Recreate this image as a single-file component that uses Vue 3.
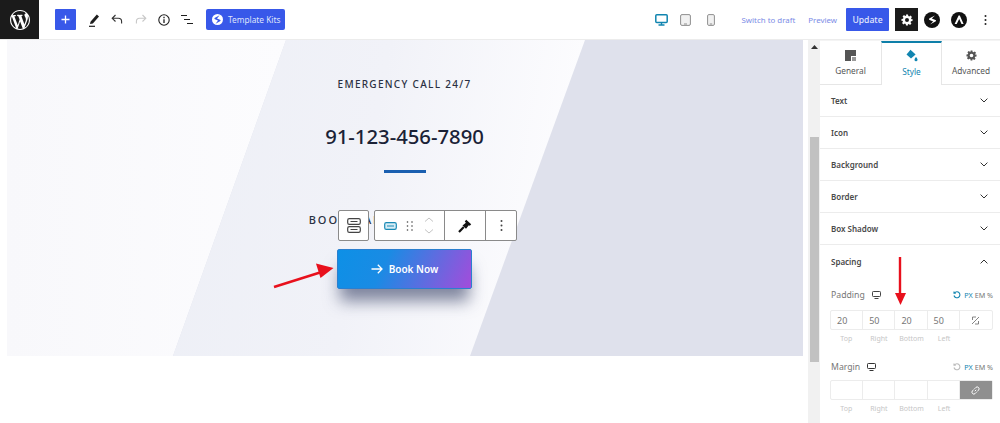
<script setup>
const wp = "M20 10c0-5.51-4.49-10-10-10C4.48 0 0 4.49 0 10c0 5.52 4.48 10 10 10 5.51 0 10-4.48 10-10zM7.78 15.37L4.37 6.22c.55-.02 1.17-.08 1.17-.08.5-.06.44-1.13-.06-1.11 0 0-1.45.11-2.37.11-.18 0-.37 0-.58-.01C4.12 2.69 6.87 1.11 10 1.11c2.33 0 4.45.87 6.05 2.34-.68-.11-1.65.39-1.65 1.58 0 .74.45 1.36.9 2.1.35.61.55 1.36.55 2.46 0 1.49-1.4 5-1.4 5l-3.03-8.37c.54-.02.82-.17.82-.17.5-.05.44-1.25-.06-1.22 0 0-1.44.12-2.38.12-.87 0-2.33-.12-2.33-.12-.5-.03-.56 1.2-.06 1.22l.92.08 1.26 3.41zM17.41 10c.24-.64.74-1.87.43-4.25.7 1.29 1.05 2.71 1.05 4.25 0 3.29-1.73 6.24-4.4 7.78.97-2.59 1.94-5.2 2.92-7.78zM6.1 18.09C3.12 16.65 1.11 13.53 1.11 10c0-1.3.23-2.48.72-3.59C3.25 10.3 4.67 14.2 6.1 18.09zm4.03-6.63l2.58 6.98c-.86.29-1.76.45-2.71.45-.79 0-1.57-.11-2.29-.33.81-2.38 1.62-4.74 2.42-7.1z"
const gear = "M10 1h4l.6 3.1 1.9.8 2.6-1.8 2.8 2.8-1.8 2.6.8 1.9L23 10v4l-3.1.6-.8 1.9 1.8 2.6-2.8 2.8-2.6-1.8-1.9.8L14 23h-4l-.6-3.1-1.9-.8-2.6 1.8-2.8-2.8 1.8-2.6-.8-1.9L1 14v-4l3.1-.6.8-1.9L3.1 4.9l2.8-2.8 2.6 1.8 1.9-.8zM12 8a4 4 0 1 0 0 8 4 4 0 0 0 0-8z"
const rows = ['Text', 'Icon', 'Background', 'Border', 'Box Shadow']
const sides = ['Top', 'Right', 'Bottom', 'Left']
const padding = ['20', '50', '20', '50']
</script>

<template>
  <div class="app">
    <header class="top">
      <div class="logo"><svg width="20" height="20" viewBox="0 0 20 20"><path :d="wp" fill="#fff" fill-rule="evenodd"/></svg></div>
      <div class="tools">
        <button class="plus"><svg width="11" height="11" viewBox="0 0 11 11"><path d="M5.5 1.5v8M1.5 5.5h8" stroke="#fff" stroke-width="1.3"/></svg></button>
        <svg class="pencil" width="12" height="14" viewBox="0 0 12 14"><path d="M2.5 8.8 8.800 1.600l2.200 1.900-6.100 7-2.900.6z" fill="#1e1e1e"/><path d="M1 13.300h6" stroke="#1e1e1e" stroke-width="1.2"/></svg>
        <svg class="undo" width="12" height="11" viewBox="0 0 12 11"><path d="M4.5 1 1.200 4.300 4.500 7.500M1.400 4.300h6c2 0 3.200 1.200 3.200 3.100v2.200" fill="none" stroke="#333" stroke-width="1.1"/></svg>
        <svg class="redo" width="12" height="11" viewBox="0 0 12 11"><path d="M7.500 1l3.300 3.300L7.500 7.500M10.600 4.300h-6c-2 0-3.200 1.200-3.200 3.100v2.200" fill="none" stroke="#c8c8c8" stroke-width="1.1"/></svg>
        <svg class="info" width="12" height="12" viewBox="0 0 12 12"><circle cx="6" cy="6" r="5.200" fill="none" stroke="#1e1e1e" stroke-width="1.1"/><path d="M6 5.200v3.800M6 2.800v1.500" stroke="#1e1e1e" stroke-width="1.3"/></svg>
        <svg class="list" width="12" height="11" viewBox="0 0 12 11"><path d="M0 1.500h6M3 5.500h6M6 9.500h6" stroke="#1e1e1e" stroke-width="1.1"/></svg>
        <button class="kits"><span class="s-dot"><svg width="7" height="9" viewBox="0 0 7 9"><path d="M5.600.3 1 2.800c-.8.400-.7 1.100 0 1.500l3 1.300L1.600 8.700 6 6.200c.8-.4.700-1.100 0-1.500L3 3.400z" fill="#3858e9"/></svg></span>Template Kits</button>
      </div>
      <div class="actions">
        <svg width="13" height="12" viewBox="0 0 13 12"><rect x=".8" y=".8" width="11.400" height="7.600" rx="1" fill="none" stroke="#1185b0" stroke-width="1.5"/><path d="M6.500 8.500v2M3.500 11h6" stroke="#1185b0" stroke-width="1.4"/></svg>
        <svg class="tablet" width="11" height="12" viewBox="0 0 11 12"><rect x=".6" y=".6" width="9.800" height="10.800" rx="1.400" fill="#f1f1f1" stroke="#8f8f8f" stroke-width="1"/><path d="M4 10h3" stroke="#8f8f8f"/></svg>
        <svg class="mobile" width="8" height="12" viewBox="0 0 8 12"><rect x=".6" y=".6" width="6.800" height="10.800" rx="1.300" fill="#f1f1f1" stroke="#8f8f8f" stroke-width="1"/><path d="M2.800 10h2.400" stroke="#8f8f8f"/></svg>
        <a class="link draft">Switch to draft</a>
        <a class="link preview">Preview</a>
        <button class="update">Update</button>
        <span class="gear"><svg width="12" height="12" viewBox="0 0 24 24"><path fill="#fff" fill-rule="evenodd" :d="gear"/></svg></span>
        <span class="round first"><svg width="16" height="16" viewBox="0 0 16 16"><circle cx="8" cy="8" r="8" fill="#111"/><path d="M11 3.600 5.600 6.300c-.9.500-.8 1.300 0 1.700l3.600 1.400-3.200 3 5.400-2.800c.9-.5.8-1.300 0-1.700L7.800 6.500z" fill="#fff"/></svg></span>
        <span class="round second"><svg width="16" height="16" viewBox="0 0 16 16"><circle cx="8" cy="8" r="8" fill="#111"/><path d="M3.600 12 7.600 3.600h1.200L12.600 12h-2.100L8.200 6.900 5.700 12z" fill="#fff"/></svg></span>
        <svg class="more" width="3" height="10" viewBox="0 0 3 10"><g fill="#222"><circle cx="1.500" cy="1" r="1"/><circle cx="1.500" cy="5" r="1"/><circle cx="1.500" cy="9" r="1"/></g></svg>
      </div>
    </header>

    <div class="main">
      <section class="canvas">
        <div class="hero">
          <p class="eyebrow">EMERGENCY CALL 24/7</p>
          <h1 class="phone">91-123-456-7890</h1>
          <div class="rule"></div>
          <p class="book-title">BOOK AN APPOINTMENT</p>
          <button class="book">
            <svg width="12" height="10" viewBox="0 0 12 10"><path d="M.5 5h10.500M6.800.8 11 5 6.800 9.200" fill="none" stroke="#fff" stroke-width="1.3"/></svg>
            <span>Book Now</span>
          </button>
          <div class="block-tools">
            <span class="tb single"><svg width="14" height="15" viewBox="0 0 14 15"><rect x=".7" y=".7" width="12.600" height="5.600" rx="1.6" fill="none" stroke="#444" stroke-width="1.2"/><rect x=".7" y="8.700" width="12.600" height="5.600" rx="1.6" fill="none" stroke="#444" stroke-width="1.2"/><path d="M3.500 3.500h7M3.500 11.500h7" stroke="#444"/></svg></span>
            <span class="tb group">
              <span class="cell c1">
                <svg width="13" height="8" viewBox="0 0 13 8"><rect x=".7" y=".7" width="11.600" height="6.600" rx="1.6" fill="#d7edf6" stroke="#1a8ab5" stroke-width="1.2"/><path d="M3 4h7" stroke="#1a8ab5"/></svg>
                <svg class="drag" width="8" height="12" viewBox="0 0 8 12"><g fill="#444"><circle cx="1.500" cy="2" r=".8"/><circle cx="6" cy="2" r=".8"/><circle cx="1.500" cy="6" r=".8"/><circle cx="6" cy="6" r=".8"/><circle cx="1.500" cy="10" r=".8"/><circle cx="6" cy="10" r=".8"/></g></svg>
                <svg class="updown" width="10" height="17" viewBox="0 0 10 17"><path d="M1 4.500 5 1l4 3.500M1 12.500l4 3.500 4-3.500" fill="none" stroke="#c4c4c4" stroke-width="1"/></svg>
              </span>
              <span class="cell c2"><svg width="14" height="14" viewBox="0 0 14 14"><path d="M8.200.8 13.200 5.200 11.800 6.800 10.800 6.200 8 9.700 4.500 6.400 7.900 3.700 6.800 2.400z" fill="#111"/><path d="M5.800 8 1 13" stroke="#111" stroke-width="2.2"/></svg></span>
              <span class="cell c3"><svg width="3" height="11" viewBox="0 0 3 11"><g fill="#444"><circle cx="1.500" cy="1" r="1"/><circle cx="1.500" cy="5.500" r="1"/><circle cx="1.500" cy="10" r="1"/></g></svg></span>
            </span>
          </div>
        </div>
      </section>

      <div class="track">
        <svg class="up" width="7" height="4" viewBox="0 0 7 4"><path d="M3.500 0 7 4H0z" fill="#333"/></svg>
        <div class="thumb"></div>
      </div>

      <aside class="side">
        <nav class="tabs">
          <div class="tab">
            <svg width="11" height="11" viewBox="0 0 11 11"><path d="M0 0h11v6H6v5H0z" fill="#555"/><path d="M7 7h4v4H7z" fill="#999"/></svg>
            <span>General</span>
          </div>
          <div class="tab on">
            <svg width="12" height="13" viewBox="0 0 12 13"><path d="M4.500.800 9.600 5.600 5 9.400.5 5.600z" fill="#1185b0"/><path d="M10 8c1 1.300 1.500 2 1.500 2.800a1.500 1.500 0 0 1-3 0C8.500 10 9 9.300 10 8z" fill="#1185b0"/></svg>
            <span>Style</span>
          </div>
          <div class="tab">
            <svg width="11" height="11" viewBox="0 0 24 24"><path fill="#555" fill-rule="evenodd" :d="gear"/></svg>
            <span>Advanced</span>
          </div>
        </nav>

        <div v-for="r in rows" :key="r" class="row">
          <span>{{ r }}</span>
          <svg width="8" height="5" viewBox="0 0 8 5"><path d="M.6.600 4 4 7.400.600" fill="none" stroke="#333" stroke-width="1"/></svg>
        </div>
        <div class="row open">
          <span>Spacing</span>
          <svg width="8" height="5" viewBox="0 0 8 5"><path d="M.6 4.400 4 1l3.400 3.400" fill="none" stroke="#333" stroke-width="1"/></svg>
        </div>

        <div class="spacing">
          <div class="field-head">
            <label>Padding</label>
            <svg width="9" height="8" viewBox="0 0 9 8"><rect x=".5" y=".5" width="8" height="5" rx=".8" fill="none" stroke="#444"/><path d="M2.500 7.500h4" stroke="#444"/></svg>
            <span class="units"><svg width="8" height="8" viewBox="0 0 8 8"><path d="M1.500 2A3 3 0 1 1 1 4.500M1 .6V2.300h1.800" fill="none" stroke="#1185b0" stroke-width="1.1"/></svg><span class="u-text"><b>PX</b> EM %</span></span>
          </div>
          <div class="inputs">
            <span v-for="(p, i) in padding" :key="i" class="in">{{ p }}</span>
            <span class="in last"><svg width="9" height="9" viewBox="0 0 9 9"><path d="M1 8l7-7M1.500 4V1H5M7.500 5v3H4" fill="none" stroke="#777" stroke-width=".9"/></svg></span>
          </div>
          <div class="caps"><span v-for="s in sides" :key="s">{{ s }}</span><span></span></div>

          <div class="field-head margin">
            <label>Margin</label>
            <svg width="9" height="8" viewBox="0 0 9 8"><rect x=".5" y=".5" width="8" height="5" rx=".8" fill="none" stroke="#333"/><path d="M2.500 7.500h4" stroke="#333"/></svg>
            <span class="units"><svg width="8" height="8" viewBox="0 0 8 8"><path d="M1.500 2A3 3 0 1 1 1 4.500M1 .6V2.300h1.800" fill="none" stroke="#bbb" stroke-width="1.1"/></svg><span class="u-text"><b>PX</b> EM %</span></span>
          </div>
          <div class="inputs">
            <span v-for="s in sides" :key="s" class="in"></span>
            <span class="in linked"><svg width="9" height="9" viewBox="0 0 9 9"><path d="M3.800 5.200 5.200 3.800M3.500 2.800 4.800 1.500a1.500 1.500 0 0 1 2.700 2.700L6.200 5.500M5.500 6.200 4.200 7.500A1.500 1.500 0 0 1 1.500 4.800L2.800 3.500" fill="none" stroke="#fff" stroke-width="1"/></svg></span>
          </div>
          <div class="caps"><span v-for="s in sides" :key="s">{{ s }}</span><span></span></div>
        </div>
      </aside>
    </div>

    <svg class="marks" width="1000" height="423" viewBox="0 0 1000 423">
      <path d="M274 287 320 272.500" stroke="#e8101c" stroke-width="2.4" fill="none"/>
      <path d="M333.500 268 316 263.500 320.500 278z" fill="#e8101c"/>
      <path d="M900 257V294" stroke="#e8101c" stroke-width="2.4" fill="none"/>
      <path d="M900.500 305 895 293H906z" fill="#e8101c"/>
    </svg>
  </div>
</template>

<style>
html, body { margin: 0; background: #fff; overflow: hidden; }
</style>

<style scoped>
.app { position: relative; width: 1000px; height: 423px; overflow: hidden; background: #fff; font-family: "Noto Sans", "Open Sans", sans-serif; color: #333; }
button { font-family: inherit; border: 0; padding: 0; }
p, h1 { margin: 0; }

.top { height: 39px; display: flex; align-items: center; border-bottom: 1px solid #ececec; box-sizing: content-box; }
.logo { width: 39px; height: 39px; background: #1b1b1b; display: flex; align-items: center; justify-content: center; }
.tools { display: flex; align-items: center; padding-left: 16px; }
.plus { width: 21px; height: 21px; background: #3858e9; border-radius: 1px; display: flex; align-items: center; justify-content: center; }
.pencil { margin-left: 12px; }
.undo { margin-left: 11px; }
.redo { margin-left: 12px; }
.info { margin-left: 11px; }
.list { margin-left: 11px; }
.kits { margin-left: 13px; width: 79px; height: 21px; background: #3858e9; border-radius: 2px; color: #dfe4fb; font-size: 8.3px; display: flex; align-items: center; padding-left: 6px; box-sizing: border-box; gap: 5px; white-space: nowrap; }
.s-dot { width: 11px; height: 11px; border-radius: 50%; background: #fff; display: flex; align-items: center; justify-content: center; }
.actions { margin-left: auto; display: flex; align-items: center; padding-right: 13px; }
.tablet { margin-left: 12px; }
.mobile { margin-left: 16px; }
.link { color: #7b8be6; font-size: 7.9px; white-space: nowrap; }
.draft { margin-left: 27px; }
.preview { margin-left: 13px; }
.update { margin-left: 9px; width: 43px; height: 23px; background: #3858e9; color: #e3e7fc; font-size: 8.6px; font-weight: 500; border-radius: 1px; }
.gear { margin-left: 6px; width: 23px; height: 23px; background: #1b1b1b; display: flex; align-items: center; justify-content: center; }
.round { display: flex; }
.first { margin-left: 6px; }
.second { margin-left: 11px; }
.more { margin-left: 17px; }

.main { display: flex; height: 383px; }
.canvas { width: 808px; padding: 0 5px 0 7px; box-sizing: border-box; }
.hero { position: relative; height: 316px; display: flex; flex-direction: column; align-items: center; padding: 36px 1px 0 0; box-sizing: border-box; background: #dfe1ec; isolation: isolate; }
.hero::before { content: ""; position: absolute; inset: 0; z-index: -1; background: linear-gradient(90deg, #f8f8fb 0, #fcfcfe 35%); clip-path: polygon(0 0, 279px 0, 166px 316px, 0 316px); }
.hero::after { content: ""; position: absolute; inset: 0; z-index: -1; background: linear-gradient(100deg, #edeff6 20%, #f1f2f8 45%, #fcfcfe 68%); clip-path: polygon(279px 0, 578px 0, 463px 316px, 166px 316px); }
.eyebrow { font-size: 10px; line-height: 16px; letter-spacing: 1.3px; color: #2a3042; font-weight: 500; white-space: nowrap; }
.phone { margin-top: 29px; font-size: 20.3px; line-height: 30px; font-weight: 500; color: #1a2236; white-space: nowrap; }
.rule { margin-top: 19px; width: 42px; height: 3px; background: #1a5fb0; }
.book-title { margin-top: 40px; font-size: 11px; line-height: 14px; letter-spacing: 2px; word-spacing: 11px; color: #2a3042; font-weight: 500; white-space: nowrap; }
.book { margin-top: 22px; width: 135px; height: 40px; box-sizing: border-box; border: 1px solid #2b7fcf; border-radius: 2px; background: linear-gradient(115deg, #0d90e6 0, #1a8be4 35%, #5a6ee0 65%, #a34cdb 100%); box-shadow: 0 15px 16px -3px rgba(48, 58, 96, .6); color: #fff; font-size: 10px; font-weight: 600; display: flex; align-items: center; justify-content: center; gap: 6px; }

.block-tools { position: absolute; left: 331px; top: 170px; display: flex; gap: 5px; }
.tb { height: 31px; box-sizing: border-box; background: #fff; border: 1px solid #8a8a8a; border-radius: 2px; display: flex; align-items: center; }
.single { width: 31px; justify-content: center; }
.group { width: 143px; }
.cell { height: 100%; display: flex; align-items: center; justify-content: center; }
.c1 { width: 70px; justify-content: flex-start; padding-left: 9px; box-sizing: border-box; border-right: 1px solid #8a8a8a; }
.drag { margin-left: 9px; }
.updown { margin-left: 10px; }
.c2 { width: 40px; border-right: 1px solid #8a8a8a; }
.c3 { flex: 1; }

.track { width: 12px; height: 383px; background: #f1f1f1; display: flex; flex-direction: column; align-items: center; }
.up { margin-top: 5px; }
.thumb { margin-top: 88px; width: 9px; height: 225px; background: #c1c1c1; align-self: flex-start; margin-left: 2px; }

.side { width: 180px; background: #fff; }
.tabs { display: flex; height: 45px; background: #f4f4f4; padding-top: 1px; box-sizing: border-box; }
.tab { width: 61px; background: #fff; border-bottom: 1px solid #e6e6e6; display: flex; flex-direction: column; align-items: center; padding-top: 9px; box-sizing: border-box; font-size: 8.3px; color: #555; gap: 4px; }
.tab:last-child { width: 58px; }
.tab.on { border-top: 2px solid #0e7fa9; border-bottom: 0; border-left: 1px solid #e6e6e6; border-right: 1px solid #e6e6e6; color: #1185b0; padding-top: 6px; gap: 4px; }
.row { height: 32px; border-bottom: 1px solid #ececec; box-sizing: border-box; display: flex; align-items: center; justify-content: space-between; padding: 0 12px 0 11px; font-size: 8px; font-weight: 600; color: #4a4a4a; }
.row.open { border-bottom: 0; }
.spacing { padding: 8px 7px 0 10px; }
.field-head { height: 20px; display: flex; align-items: center; gap: 7px; font-size: 8.7px; color: #777; }
.field-head label { margin-left: 1px; }
.units { margin-left: auto; display: flex; align-items: center; gap: 3px; font-size: 7.2px; color: #777; white-space: nowrap; }
.units b { color: #1185b0; font-weight: 400; }
.inputs { display: grid; grid-template-columns: repeat(5, 1fr); height: 18px; border: 1px solid #ececec; border-radius: 2px; margin-top: 5px; }
.margin + .inputs { margin-top: 3px; }
.in { border-right: 1px solid #ececec; display: flex; align-items: center; padding-left: 6px; font-size: 9px; color: #777; min-width: 0; }
.last { border-right: 0; justify-content: center; padding-left: 0; }
.linked { background: #8f8f8f; border-right: 0; justify-content: center; padding-left: 0; }
.caps { display: grid; grid-template-columns: repeat(5, 1fr); margin-top: 3px; font-size: 7px; line-height: 11px; color: #c6c6c6; text-align: center; }
.margin { margin-top: 13px; }

.marks { position: absolute; left: 0; top: 0; pointer-events: none; }
</style>
